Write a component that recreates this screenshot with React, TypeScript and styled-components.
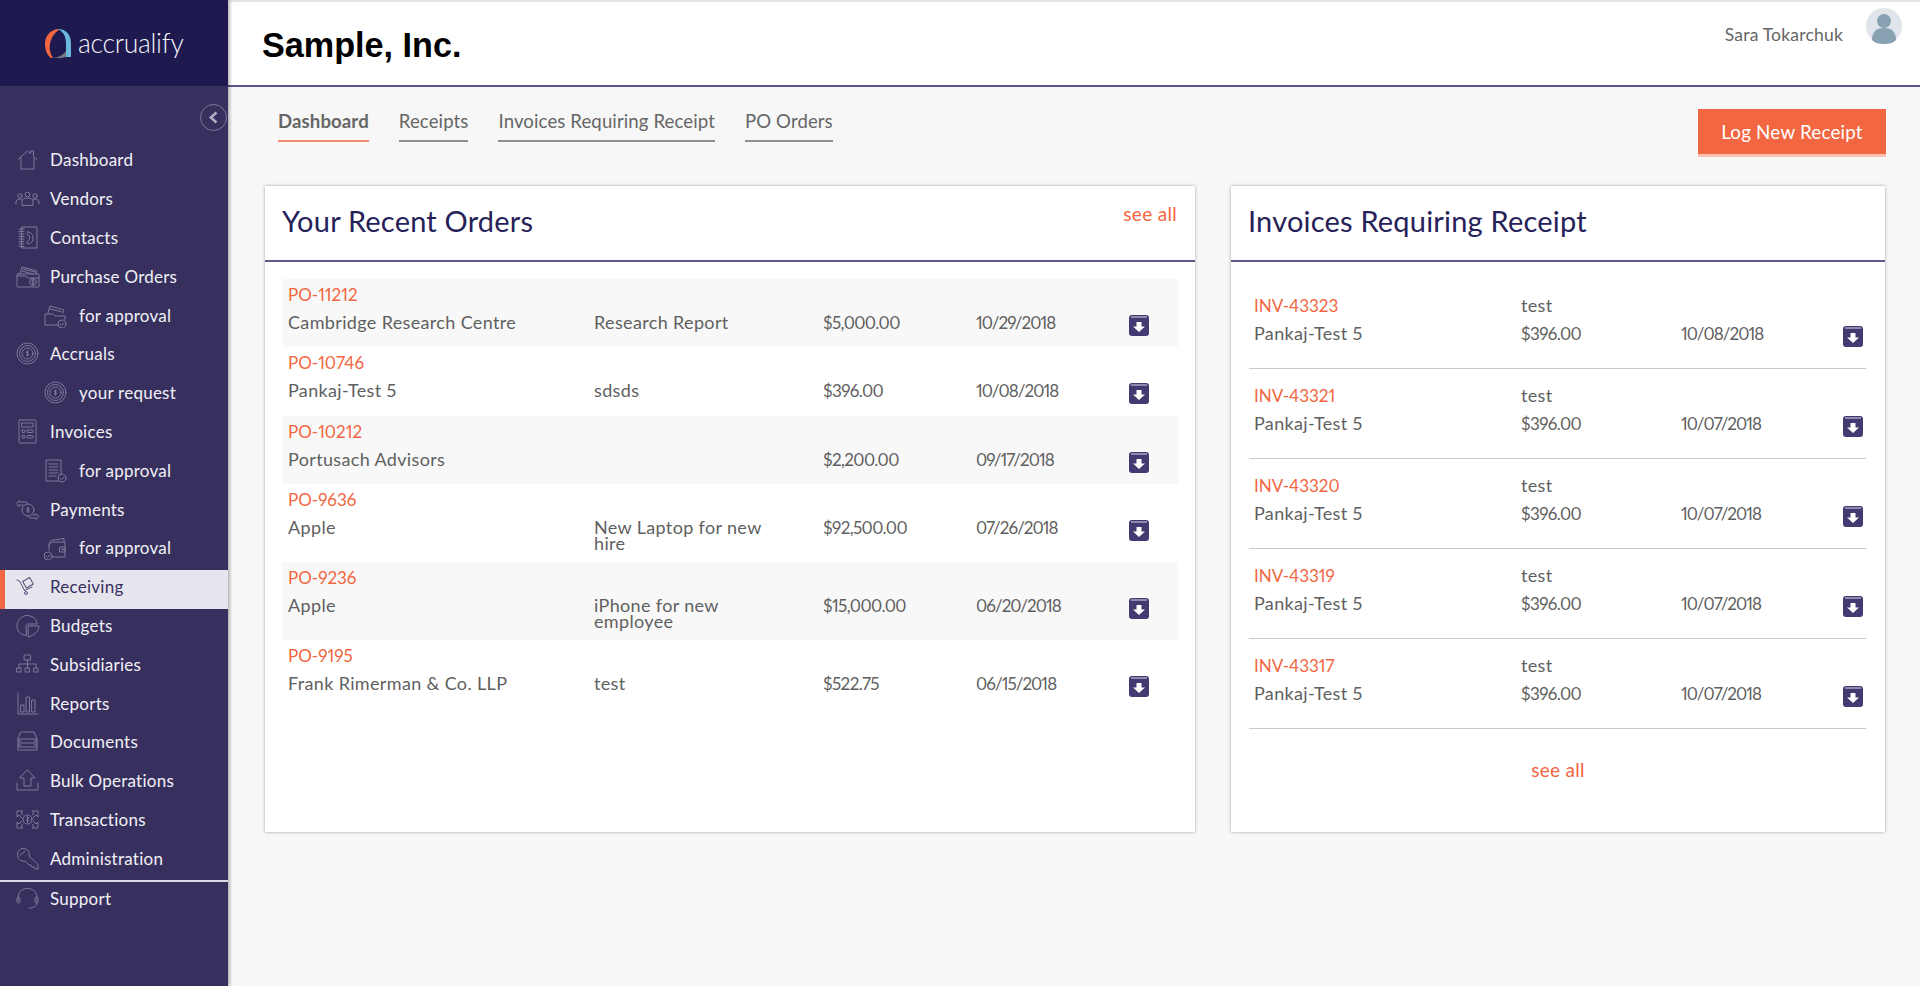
import React from "react"
import styled, { createGlobalStyle } from "styled-components"

const GlobalStyle = createGlobalStyle`
  html, body {
    margin: 0;
    padding: 0;
    height: 100%;
    background: #f7f7f7;
  }
  body {
    font-family: "Lato", "Liberation Sans", sans-serif;
    font-variant-numeric: proportional-nums;
    overflow: hidden;
  }
`

const Page = styled.div`
  display: flex;
  width: 1920px;
  height: 986px;
  overflow: hidden;
`

const Sidebar = styled.aside`
  flex: 0 0 228px;
  position: relative;
  z-index: 1;
  background: #37305f;
  box-shadow: 2px 0 3px rgba(0, 0, 0, 0.28);
`

const LogoBar = styled.div`
  height: 86px;
  background: #1e1a50;
  display: flex;
  align-items: center;
  gap: 6px;
  padding-left: 45px;
  box-sizing: border-box;
`

const LogoText = styled.span`
  color: #f2f1f6;
  font-size: 26.5px;
  font-weight: 300;
  letter-spacing: -0.3px;
  line-height: 32px;
`

const ToggleRow = styled.div`
  height: 57.1px;
  display: flex;
  justify-content: flex-end;
  align-items: flex-start;
  padding-top: 18px;
  box-sizing: border-box;
`

const Toggle = styled.button`
  width: 27px;
  height: 27px;
  margin-right: 1px;
  padding: 0;
  border-radius: 50%;
  border: 1.5px solid #7f7898;
  background: transparent;
  display: flex;
  align-items: center;
  justify-content: center;
`

const NavRow = styled.a<{ $active?: boolean; $sub?: boolean }>`
  display: flex;
  align-items: center;
  height: 38.8px;
  box-sizing: border-box;
  padding-bottom: 5px;
  padding-left: ${(p) => (p.$sub ? "43px" : p.$active ? "10px" : "15px")};
  gap: ${(p) => (p.$sub ? "11px" : "10px")};
  font-size: 17px;
  letter-spacing: 0.25px;
  color: ${(p) => (p.$active ? "#37305f" : "#f1f0f5")};
  background: ${(p) => (p.$active ? "#e6e4ec" : "transparent")};
  border-left: ${(p) => (p.$active ? "5px solid #f26641" : "0")};
`

const NavDivider = styled.div`
  height: 2px;
  margin-bottom: -1px;
  background: #dcdae6;
`

const IconBox = styled.svg<{ $dark?: boolean }>`
  flex: 0 0 25px;
  width: 25px;
  height: 25px;
  fill: none;
  stroke: ${(p) => (p.$dark ? "#55507c" : "#7f7899")};
  stroke-width: 1;
  stroke-linecap: round;
  stroke-linejoin: round;
`

const Main = styled.main`
  flex: 1;
  display: flex;
  flex-direction: column;
  min-width: 0;
`

const TopBar = styled.header`
  height: 87px;
  box-sizing: border-box;
  background: #fff;
  border-top: 2px solid #e4e4e4;
  border-bottom: 2px solid #5c5589;
  display: flex;
  justify-content: space-between;
  align-items: flex-start;
  padding: 0 18px 0 34px;
`

const CompanyName = styled.h1`
  margin: 22px 0 0;
  font-family: "Liberation Sans", Arial, sans-serif;
  font-weight: 700;
  font-size: 34.2px;
  line-height: 42px;
  color: #000;
`

const UserBox = styled.div`
  display: flex;
  align-items: flex-start;
  gap: 23px;
  margin-top: 6px;
`

const UserName = styled.span`
  margin-top: 15px;
  font-size: 17.5px;
  line-height: 24px;
  letter-spacing: 0.2px;
  font-weight: 400;
  color: #666;
`

const Content = styled.div`
  flex: 1;
  padding: 0 34px 0 37px;
`

const TabBar = styled.div`
  height: 99px;
  display: flex;
  justify-content: space-between;
  align-items: flex-start;
  padding-left: 13px;
`

const Tabs = styled.nav`
  display: flex;
  gap: 30px;
  padding-top: 21px;
`

const Tab = styled.a<{ $active?: boolean }>`
  height: 32px;
  line-height: 27px;
  font-size: 18.6px;
  letter-spacing: 0.1px;
  color: #666;
  font-weight: ${(p) => (p.$active ? 700 : 400)};
  border-bottom: 2px solid ${(p) => (p.$active ? "#f58a6d" : "#8f8f8f")};
`

const LogButton = styled.button`
  width: 188px;
  height: 48px;
  margin-top: 22px;
  border: 0;
  border-bottom: 3px solid #fcc1b0;
  background: #f26641;
  color: #fff;
  font-family: inherit;
  font-size: 18.8px;
  letter-spacing: 0.2px;
`

const Cards = styled.div`
  display: grid;
  grid-template-columns: 930px 654px;
  gap: 36px;
`

const Card = styled.section`
  position: relative;
  height: 646px;
  box-sizing: border-box;
  background: #fff;
  box-shadow: 0 0 3px rgba(0, 0, 0, 0.35);
`

const CardHead = styled.div`
  height: 76px;
  box-sizing: border-box;
  border-bottom: 2px solid #5e5788;
  display: flex;
  justify-content: space-between;
  padding: 0 18px 0 17px;
`

const CardTitle = styled.h2`
  margin: 17px 0 0;
  font-size: 29px;
  line-height: 36px;
  letter-spacing: 0.2px;
  font-weight: 400;
  color: #272159;
`

const SeeAll = styled.a`
  font-size: 19px;
  line-height: 24px;
  letter-spacing: 0.3px;
  color: #f26641;
`

const TopSeeAll = styled(SeeAll)`
  margin-top: 16px;
`

const OrderList = styled.div`
  padding: 17px 17px 0;
`

const OrderRow = styled.div`
  min-height: 68.4px;
  box-sizing: border-box;
  padding: 4px 6px 11px;
  color: #5f5f5f;
  font-size: 18px;
  letter-spacing: 0.35px;

  &:nth-child(odd) {
    background: #f8f8f8;
  }
`

const RowLink = styled.a`
  display: block;
  font-size: 17px;
  letter-spacing: 0;
  line-height: 24px;
  color: #f26641;
`

const OrderCols = styled.div`
  display: grid;
  grid-template-columns: 306px 229px 153px 153px 20px;
  margin-top: 4px;
  line-height: 22px;
`

const Description = styled.div`
  width: 172px;
  padding-top: 3px;
  line-height: 16px;
`

const Amount = styled.div`
  font-size: 17px;
  line-height: 24px;
  letter-spacing: -0.6px;
`

const DateCell = styled.div`
  font-size: 17px;
  line-height: 24px;
  letter-spacing: -0.95px;
`

const Archive = styled.svg`
  display: block;
  width: 20px;
  height: 21px;
  margin-top: 4px;
`

const InvoiceList = styled.div`
  padding: 17px 19px 0 18px;
`

const InvoiceRow = styled.div`
  height: 90px;
  box-sizing: border-box;
  padding: 15px 5px 0;
  border-bottom: 1px solid #c9c9c9;
  color: #5f5f5f;
  font-size: 18px;
  letter-spacing: 0.35px;
  display: grid;
  grid-template-columns: 267px 160px 162px 20px;
  grid-auto-rows: 24px;
  row-gap: 4px;
  line-height: 22px;
`

const FootLink = styled.div`
  text-align: center;
  margin-top: 29px;
`

const ArchiveIcon = () => (
  <Archive viewBox="0 0 20 21">
    <rect x="0" y="0" width="20" height="21" rx="3" fill="#423a70" />
    <rect x="2" y="1" width="16" height="2" fill="#8f89ad" />
    <path d="M7.500 7h5v4.500h3.500L10 17l-6-5.500h3.500z" fill="#fff" />
  </Archive>
)

const LogoMark = () => (
  <svg width="27" height="29" viewBox="0 0 27 29">
    <path d="M13 0C5 1 0 7 0 15c0 6 2 11 6 14h2C5 24 4 20 5 15 6 9 9 4 14 1z" fill="#f26641" />
    <path d="M13 0c8 0 13 6 13 14v14h-5V15C21 8 19 3 13 0z" fill="#6cb8dc" />
    <path d="M7 29c6 0 11-3 14-7v6c-4 1-9 2-14 1z" fill="#77777f" />
  </svg>
)

const check = (cx: number, cy: number) => (
  <>
    <circle cx={cx} cy={cy} r="4" />
    <path d={`M${cx - 2} ${cy}l1.500 1.500 2.500-2.500`} />
  </>
)

const dollar = (x: number, y: number) => (
  <path d={`M${x + 1.2} ${y - 1.5}c-.4-.7-2.400-.8-2.400.5 0 1.400 2.400 .7 2.400 2 0 1.300-2 1.200-2.400 .5M${x} ${y - 2.5}v5`} />
)

const icons: Record<string, React.ReactNode> = {
  home: <path d="M3 12.500 12.500 4l3 2.700V4h3v5.400l3.500 3.100M6 10.500V22h13V10.500" />,
  vendors: (
    <>
      <circle cx="5" cy="10" r="2.200" />
      <circle cx="12.500" cy="8.500" r="2.400" />
      <circle cx="20" cy="10" r="2.200" />
      <path d="M1 18v-2c0-1.500 1.500-3 4-3 1 0 2 .3 2.500 .8M24 18v-2c0-1.500-1.500-3-4-3-1 0-2 .3-2.500 .8M7 19v-4c0-2 2.500-3 5.500-3s5.500 1 5.500 3v4z" />
    </>
  ),
  contacts: (
    <>
      <path d="M7 2h15v21H7zM4 4h5M4 6.500h5M4 9h5M4 11.500h5M4 14h5M4 16.500h5M4 19h5M4 21.500h5" />
      <path d="M13 7c4 1 5 3 5 6s-1 5-5 6c-1-1-1-2-.5-3 1.500 0 2-1 2-3s-.5-3-2-3c-.5-1-.5-2 .5-3z" />
    </>
  ),
  wallet: (
    <>
      <path d="M5 10 7 3l15 4-1 3M7 7l11 3M8 5l12 3" />
      <rect x="2" y="10" width="22" height="13" rx="1" />
      <path d="M2 12h8l3 2h11" />
      <circle cx="18" cy="18" r="3.500" />
      {dollar(18, 18)}
    </>
  ),
  folderCheck: (
    <>
      <path d="M5 10 7 3l14 4-1 3M7 6l12 3" />
      <path d="M15 22H2V11h8l2 2h10v4" />
      {check(19, 21)}
    </>
  ),
  target: (
    <>
      <circle cx="12.500" cy="12.500" r="10.500" />
      <circle cx="12.500" cy="12.500" r="8" />
      <circle cx="12.500" cy="12.500" r="5.500" />
      {dollar(12.5, 12.5)}
    </>
  ),
  calculator: (
    <>
      <rect x="4" y="1" width="17" height="23" rx="1" />
      <rect x="7" y="4" width="11" height="4" />
      <rect x="7" y="11" width="3" height="2.500" rx=".5" />
      <rect x="12" y="11" width="6" height="2.500" rx=".5" />
      <rect x="7" y="16.500" width="3" height="2.500" rx=".5" />
      <rect x="12" y="16.500" width="6" height="2.500" rx=".5" />
    </>
  ),
  document: (
    <>
      <path d="M15 23H3V2h15v15" />
      <path d="M6 6h9M6 9h9M6 12h9M6 15h9M6 18h7" />
      {check(19, 20)}
    </>
  ),
  payments: (
    <>
      <circle cx="13" cy="13" r="6" />
      {dollar(13, 13)}
      <path d="M8 8 4 8V9.500L1.500 6.500 4 3.500V5h7l2 2M18 18h3V16.500l3 3-3 3V21h-6l-2-2" />
    </>
  ),
  purse: (
    <>
      <path d="M6 10c0-3 2-5 5-5l10-1.500V7" />
      <path d="M9 22h13V7H11c-3 0-5 1-5 4v4" />
      <rect x="17" y="12" width="5" height="5" />
      <circle cx="19.500" cy="14.500" r=".8" />
      {check(5, 21)}
    </>
  ),
  cart: (
    <>
      <path d="M2 6l2.500 1 5 9.500" />
      <rect x="9" y="5" width="8" height="7.500" transform="rotate(-30 13 8.750)" />
      <path d="M9.500 16.500l7.500-3.500" />
      <circle cx="11" cy="19" r="1.500" />
    </>
  ),
  budgets: (
    <>
      <path d="M11 22.500C6 22.500 2 18 2 13S6 2.500 12 2.500 22 7 22 11h-9c-1 0-2 1-2 2z" />
      <path d="M13.500 13H24c0 5-4 9-10.500 11z" />
    </>
  ),
  tree: (
    <path d="M9.500 3h6v5h-6zM12.500 8v4M4 16v-4h17v4M12.500 12v4M2 16h4v4H2zM10.500 16h4v4h-4zM19 16h4v4h-4z" />
  ),
  reports: <path d="M3 2v21h20M6 14h3v7H6zM11.500 6h3v15h-3zM17 9h3v12h-3z" />,
  documents: (
    <path d="M6 3h13l3 7v11H3V10zM3 10h19M3 14h19M3 18h19M3 12h3M19 12h3M3 16h3M19 16h3" />
  ),
  upload: <path d="M12.500 2 20 10h-4v8H9v-8H5zM2 15v7h21v-7" />,
  transfer: (
    <>
      <circle cx="12.500" cy="12.500" r="4.500" />
      <path d="M12 10.500c1.500-.5 2 .4 1.500 1-.6 .6-2 .5-2 1.500 0 1.200 1.500 1.200 2.500 .8M12.500 9.500v6" />
      <path d="M8 8 6 6l2-2H2v6l2-2 3 3M17 8l2-2-2-2h6v6l-2-2-3 3M8 17l-2 2 2 2H2v-6l2 2 3-3M17 17l2 2-2 2h6v-6l-2 2-3-3" />
    </>
  ),
  key: (
    <>
      <path d="M2.500 8C3 4 6 2 9 2.500c4 .5 6 4 5 7.500l9 8.500v4.500h-3l-1-2h-2l-1-2h-2l-4-4C6 16 2 13 2.500 8z" />
      <path d="M5 9.500 10 5" />
    </>
  ),
  headset: (
    <>
      <path d="M3 15v-3C3 6 7 2.500 12.500 2.500S22 6 22 12v3" />
      <rect x="2" y="11" width="3" height="6" rx="1.500" />
      <rect x="20" y="11" width="3" height="6" rx="1.500" />
      <path d="M22 16c0 4-3 6-8 6" />
    </>
  ),
}

const NavIcon = ({ name, dark }: { name: string; dark?: boolean }) => (
  <IconBox viewBox="0 0 25 25" $dark={dark}>
    {icons[name]}
  </IconBox>
)

const navItems = [
  { label: "Dashboard", icon: "home" },
  { label: "Vendors", icon: "vendors" },
  { label: "Contacts", icon: "contacts" },
  { label: "Purchase Orders", icon: "wallet" },
  { label: "for approval", icon: "folderCheck", sub: true },
  { label: "Accruals", icon: "target" },
  { label: "your request", icon: "target", sub: true },
  { label: "Invoices", icon: "calculator" },
  { label: "for approval", icon: "document", sub: true },
  { label: "Payments", icon: "payments" },
  { label: "for approval", icon: "purse", sub: true },
  { label: "Receiving", icon: "cart", active: true },
  { label: "Budgets", icon: "budgets" },
  { label: "Subsidiaries", icon: "tree" },
  { label: "Reports", icon: "reports" },
  { label: "Documents", icon: "documents" },
  { label: "Bulk Operations", icon: "upload" },
  { label: "Transactions", icon: "transfer" },
  { label: "Administration", icon: "key" },
]

const orders = [
  { id: "PO-11212", vendor: "Cambridge Research Centre", desc: "Research Report", amount: "$5,000.00", date: "10/29/2018" },
  { id: "PO-10746", vendor: "Pankaj-Test 5", desc: "sdsds", amount: "$396.00", date: "10/08/2018" },
  { id: "PO-10212", vendor: "Portusach Advisors", desc: "", amount: "$2,200.00", date: "09/17/2018" },
  { id: "PO-9636", vendor: "Apple", desc: "New Laptop for new hire", amount: "$92,500.00", date: "07/26/2018" },
  { id: "PO-9236", vendor: "Apple", desc: "iPhone for new employee", amount: "$15,000.00", date: "06/20/2018" },
  { id: "PO-9195", vendor: "Frank Rimerman & Co. LLP", desc: "test", amount: "$522.75", date: "06/15/2018" },
]

const invoices = [
  { id: "INV-43323", date: "10/08/2018" },
  { id: "INV-43321", date: "10/07/2018" },
  { id: "INV-43320", date: "10/07/2018" },
  { id: "INV-43319", date: "10/07/2018" },
  { id: "INV-43317", date: "10/07/2018" },
]

function App() {
  return (
    <Page>
      <GlobalStyle />
      <Sidebar>
        <LogoBar>
          <LogoMark />
          <LogoText>accrualify</LogoText>
        </LogoBar>
        <ToggleRow>
          <Toggle aria-label="Collapse menu">
            <svg width="11" height="13" viewBox="0 0 11 13">
              <path d="M8.500 1.500 2.800 6.500l5.700 5" fill="none" stroke="#b3aec5" strokeWidth="2.500" />
            </svg>
          </Toggle>
        </ToggleRow>
        {navItems.map((item, i) => (
          <NavRow key={i} $sub={item.sub} $active={item.active}>
            <NavIcon name={item.icon} dark={item.active} />
            {item.label}
          </NavRow>
        ))}
        <NavDivider />
        <NavRow>
          <NavIcon name="headset" />
          Support
        </NavRow>
      </Sidebar>
      <Main>
        <TopBar>
          <CompanyName>Sample, Inc.</CompanyName>
          <UserBox>
            <UserName>Sara Tokarchuk</UserName>
            <svg width="36" height="36" viewBox="0 0 36 36">
              <circle cx="18" cy="18" r="18" fill="#dfe5ea" />
              <circle cx="18" cy="13" r="7" fill="#87a0b2" />
              <path d="M6 32c0-8 4-12 12-12s12 4 12 12c-3 3-7 4-12 4s-9-1-12-4z" fill="#87a0b2" />
            </svg>
          </UserBox>
        </TopBar>
        <Content>
          <TabBar>
            <Tabs>
              <Tab $active>Dashboard</Tab>
              <Tab>Receipts</Tab>
              <Tab>Invoices Requiring Receipt</Tab>
              <Tab>PO Orders</Tab>
            </Tabs>
            <LogButton>Log New Receipt</LogButton>
          </TabBar>
          <Cards>
            <Card>
              <CardHead>
                <CardTitle>Your Recent Orders</CardTitle>
                <TopSeeAll>see all</TopSeeAll>
              </CardHead>
              <OrderList>
                {orders.map((o) => (
                  <OrderRow key={o.id}>
                    <RowLink>{o.id}</RowLink>
                    <OrderCols>
                      <div>{o.vendor}</div>
                      <Description>{o.desc}</Description>
                      <Amount>{o.amount}</Amount>
                      <DateCell>{o.date}</DateCell>
                      <ArchiveIcon />
                    </OrderCols>
                  </OrderRow>
                ))}
              </OrderList>
            </Card>
            <Card>
              <CardHead>
                <CardTitle>Invoices Requiring Receipt</CardTitle>
              </CardHead>
              <InvoiceList>
                {invoices.map((inv) => (
                  <InvoiceRow key={inv.id}>
                    <RowLink>{inv.id}</RowLink>
                    <div>test</div>
                    <div />
                    <div />
                    <div>Pankaj-Test 5</div>
                    <Amount>$396.00</Amount>
                    <DateCell>{inv.date}</DateCell>
                    <ArchiveIcon />
                  </InvoiceRow>
                ))}
              </InvoiceList>
              <FootLink>
                <SeeAll>see all</SeeAll>
              </FootLink>
            </Card>
          </Cards>
        </Content>
      </Main>
    </Page>
  )
}

export default App
